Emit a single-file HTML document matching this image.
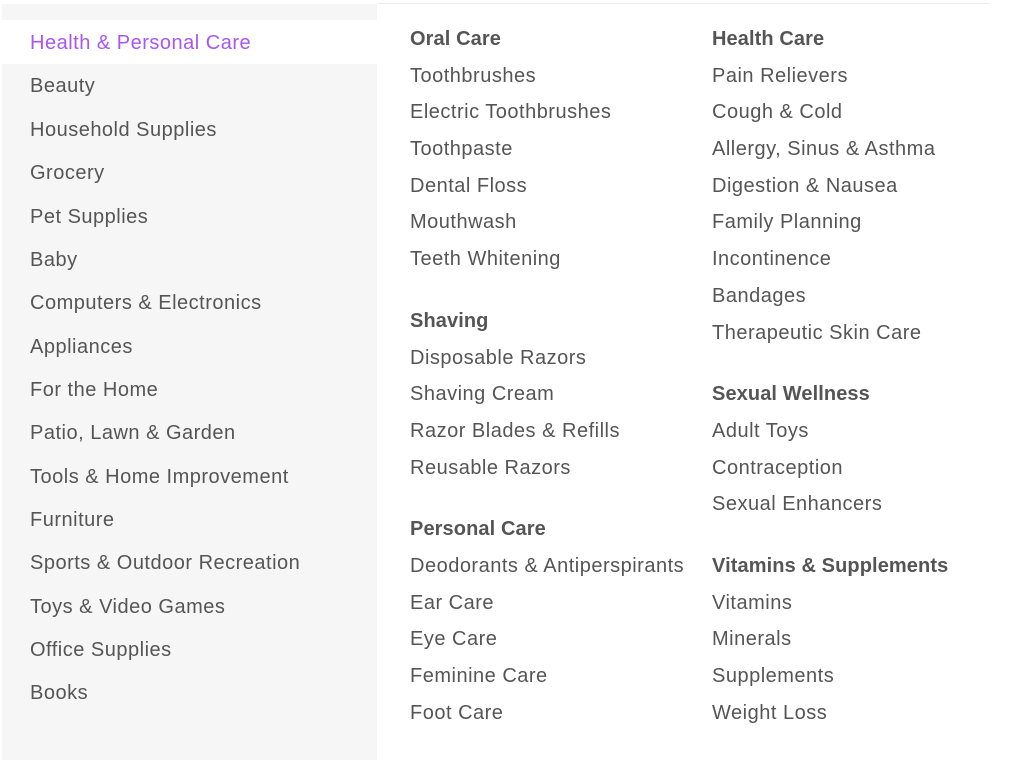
<!DOCTYPE html>
<html><head><meta charset="utf-8"><style>
html,body{margin:0;padding:0;background:#fff;width:1024px;height:768px;overflow:hidden}
body{font-family:"Liberation Sans",sans-serif;font-size:20px;letter-spacing:0.5px;color:#555;position:relative}
.side{position:absolute;left:2px;top:4px;width:375px;height:756px;background:#f6f6f6}
.side .act{position:absolute;left:0;top:16px;width:375px;height:44px;background:#fff}
.side .it{position:absolute;left:28px;height:43.4px;line-height:43.4px;white-space:nowrap}
.side .on{color:#a855f7}
.topline{position:absolute;left:378px;top:3px;width:612px;height:1px;background:#eee}
.col{position:absolute;top:21px}
.col div{height:36.7px;line-height:36.7px;white-space:nowrap}
.col b{display:block;height:36.7px;line-height:36.7px;font-weight:bold;color:#555;letter-spacing:0.1px}
.col b.g{margin-top:25px}
</style></head><body>
<div class="side">
<div class="act"></div>
<div class="it on" style="top:18px">Health &amp; Personal Care</div>
<div class="it" style="top:61px">Beauty</div>
<div class="it" style="top:104.5px">Household Supplies</div>
<div class="it" style="top:148px">Grocery</div>
<div class="it" style="top:191.5px">Pet Supplies</div>
<div class="it" style="top:235px">Baby</div>
<div class="it" style="top:278px">Computers &amp; Electronics</div>
<div class="it" style="top:321.5px">Appliances</div>
<div class="it" style="top:365px">For the Home</div>
<div class="it" style="top:408px">Patio, Lawn &amp; Garden</div>
<div class="it" style="top:451.5px">Tools &amp; Home Improvement</div>
<div class="it" style="top:494.5px">Furniture</div>
<div class="it" style="top:538px">Sports &amp; Outdoor Recreation</div>
<div class="it" style="top:581.5px">Toys &amp; Video Games</div>
<div class="it" style="top:625px">Office Supplies</div>
<div class="it" style="top:668px">Books</div>
</div>
<div class="topline"></div>
<div class="col" style="left:410px">
<b>Oral Care</b><div>Toothbrushes</div><div>Electric Toothbrushes</div><div>Toothpaste</div><div>Dental Floss</div><div>Mouthwash</div><div>Teeth Whitening</div>
<b class="g">Shaving</b><div>Disposable Razors</div><div>Shaving Cream</div><div>Razor Blades &amp; Refills</div><div>Reusable Razors</div>
<b class="g">Personal Care</b><div>Deodorants &amp; Antiperspirants</div><div>Ear Care</div><div>Eye Care</div><div>Feminine Care</div><div>Foot Care</div>
</div>
<div class="col" style="left:712px">
<b>Health Care</b><div>Pain Relievers</div><div>Cough &amp; Cold</div><div>Allergy, Sinus &amp; Asthma</div><div>Digestion &amp; Nausea</div><div>Family Planning</div><div>Incontinence</div><div>Bandages</div><div>Therapeutic Skin Care</div>
<b class="g">Sexual Wellness</b><div>Adult Toys</div><div>Contraception</div><div>Sexual Enhancers</div>
<b class="g">Vitamins &amp; Supplements</b><div>Vitamins</div><div>Minerals</div><div>Supplements</div><div>Weight Loss</div>
</div>
</body></html>
